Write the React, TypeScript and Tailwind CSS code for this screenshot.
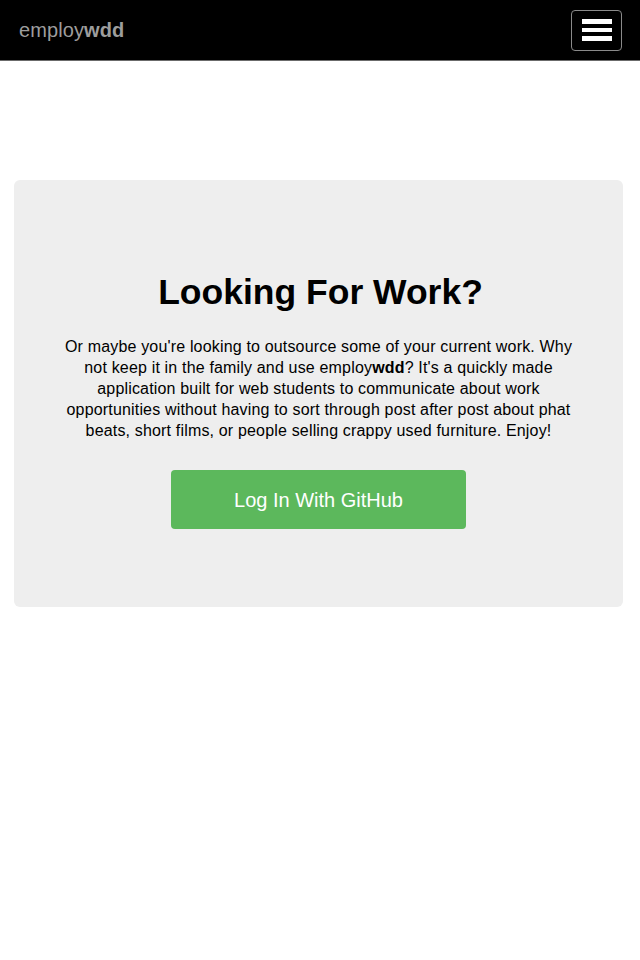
export default function App() {
  return (
    <div className="min-h-[960px] bg-white" style={{ fontFamily: '"Liberation Sans", Arial, sans-serif' }}>
      <nav className="h-[61px] bg-black border-b border-[#6b6b6b] flex items-center justify-between pl-[19px] pr-[18px]">
        <a href="#" className="text-[20px] text-[#9d9d9d] tracking-[0.1px]">
          employ<b>wdd</b>
        </a>
        <button className="w-[51px] h-[41px] border border-[#8a8a8a] rounded-[4px] flex flex-col items-center justify-center gap-[4px]">
          <span className="block w-[30px] h-[4.5px] bg-white" />
          <span className="block w-[30px] h-[4.5px] bg-white" />
          <span className="block w-[30px] h-[4.5px] bg-white" />
        </button>
      </nav>
      <div className="pl-[14px] pr-[17px] pt-[119px]">
        <div className="bg-[#eeeeee] rounded-[6px] h-[427px] flex flex-col items-center pt-[92px] text-black">
          <h1 className="text-[35.5px] font-bold leading-[40px] pl-[4px]">Looking For Work?</h1>
          <p className="mt-[24px] w-[520px] text-center text-[16px] leading-[21px] tracking-[0.17px]">
            Or maybe you're looking to outsource some of your current work. Why not keep it in the family and use employ<b>wdd</b>? It's a quickly made application built for web students to communicate about work opportunities without having to sort through post after post about phat beats, short films, or people selling crappy used furniture. Enjoy!
          </p>
          <button className="mt-[29px] w-[295px] h-[59px] bg-[#5cb85c] rounded-[4px] text-white text-[20px]">
            Log In With GitHub
          </button>
        </div>
      </div>
    </div>
  )
}
